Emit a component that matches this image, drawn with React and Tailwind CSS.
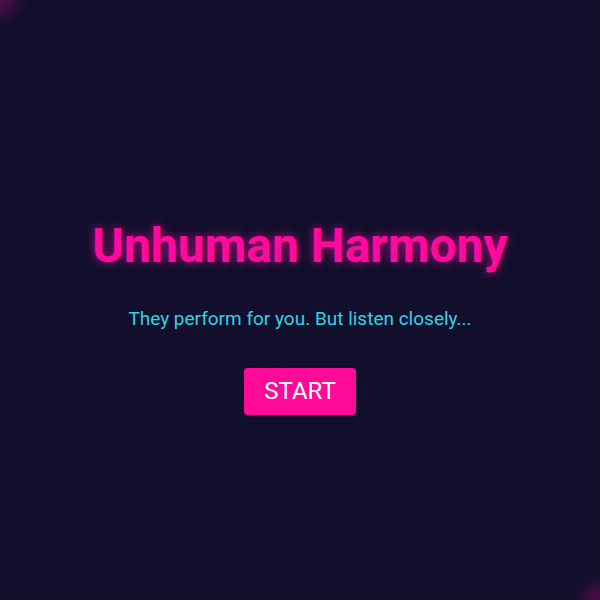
import React from 'react';

const App = () => {
  return (
    <div className="relative h-screen w-full overflow-hidden bg-[#100f26] font-['Roboto',sans-serif]">
      {/* faint grid + corner glows */}
      <div className="pointer-events-none absolute inset-0 bg-[linear-gradient(rgba(120,80,255,0.035)_1px,transparent_1px),linear-gradient(90deg,rgba(120,80,255,0.035)_1px,transparent_1px)] bg-[size:4px_4px]" />
      <div className="pointer-events-none absolute -left-4 -top-4 h-8 w-8 rounded-full bg-[#ff0a9c] opacity-25 blur-sm" />
      <div className="pointer-events-none absolute -bottom-4 -right-4 h-8 w-8 rounded-full bg-[#ff0a9c] opacity-25 blur-sm" />

      <div className="relative flex h-full flex-col items-center justify-center pt-[32px]">
        <h1 className="text-[48px] font-bold leading-[56px] text-[#ff0a9c] [text-shadow:0_0_10px_rgba(255,10,156,0.7)]">
          Unhuman Harmony
        </h1>
        <p className="mt-[31px] text-[19px] leading-[28px] text-[#2fd3e3]">
          They perform for you. But listen closely...
        </p>
        <button className="mt-[35px] h-[47px] w-[112px] rounded-[4px] bg-[#ff0a99] text-[24px] text-white">
          START
        </button>
      </div>
    </div>
  );
};

export default App;
